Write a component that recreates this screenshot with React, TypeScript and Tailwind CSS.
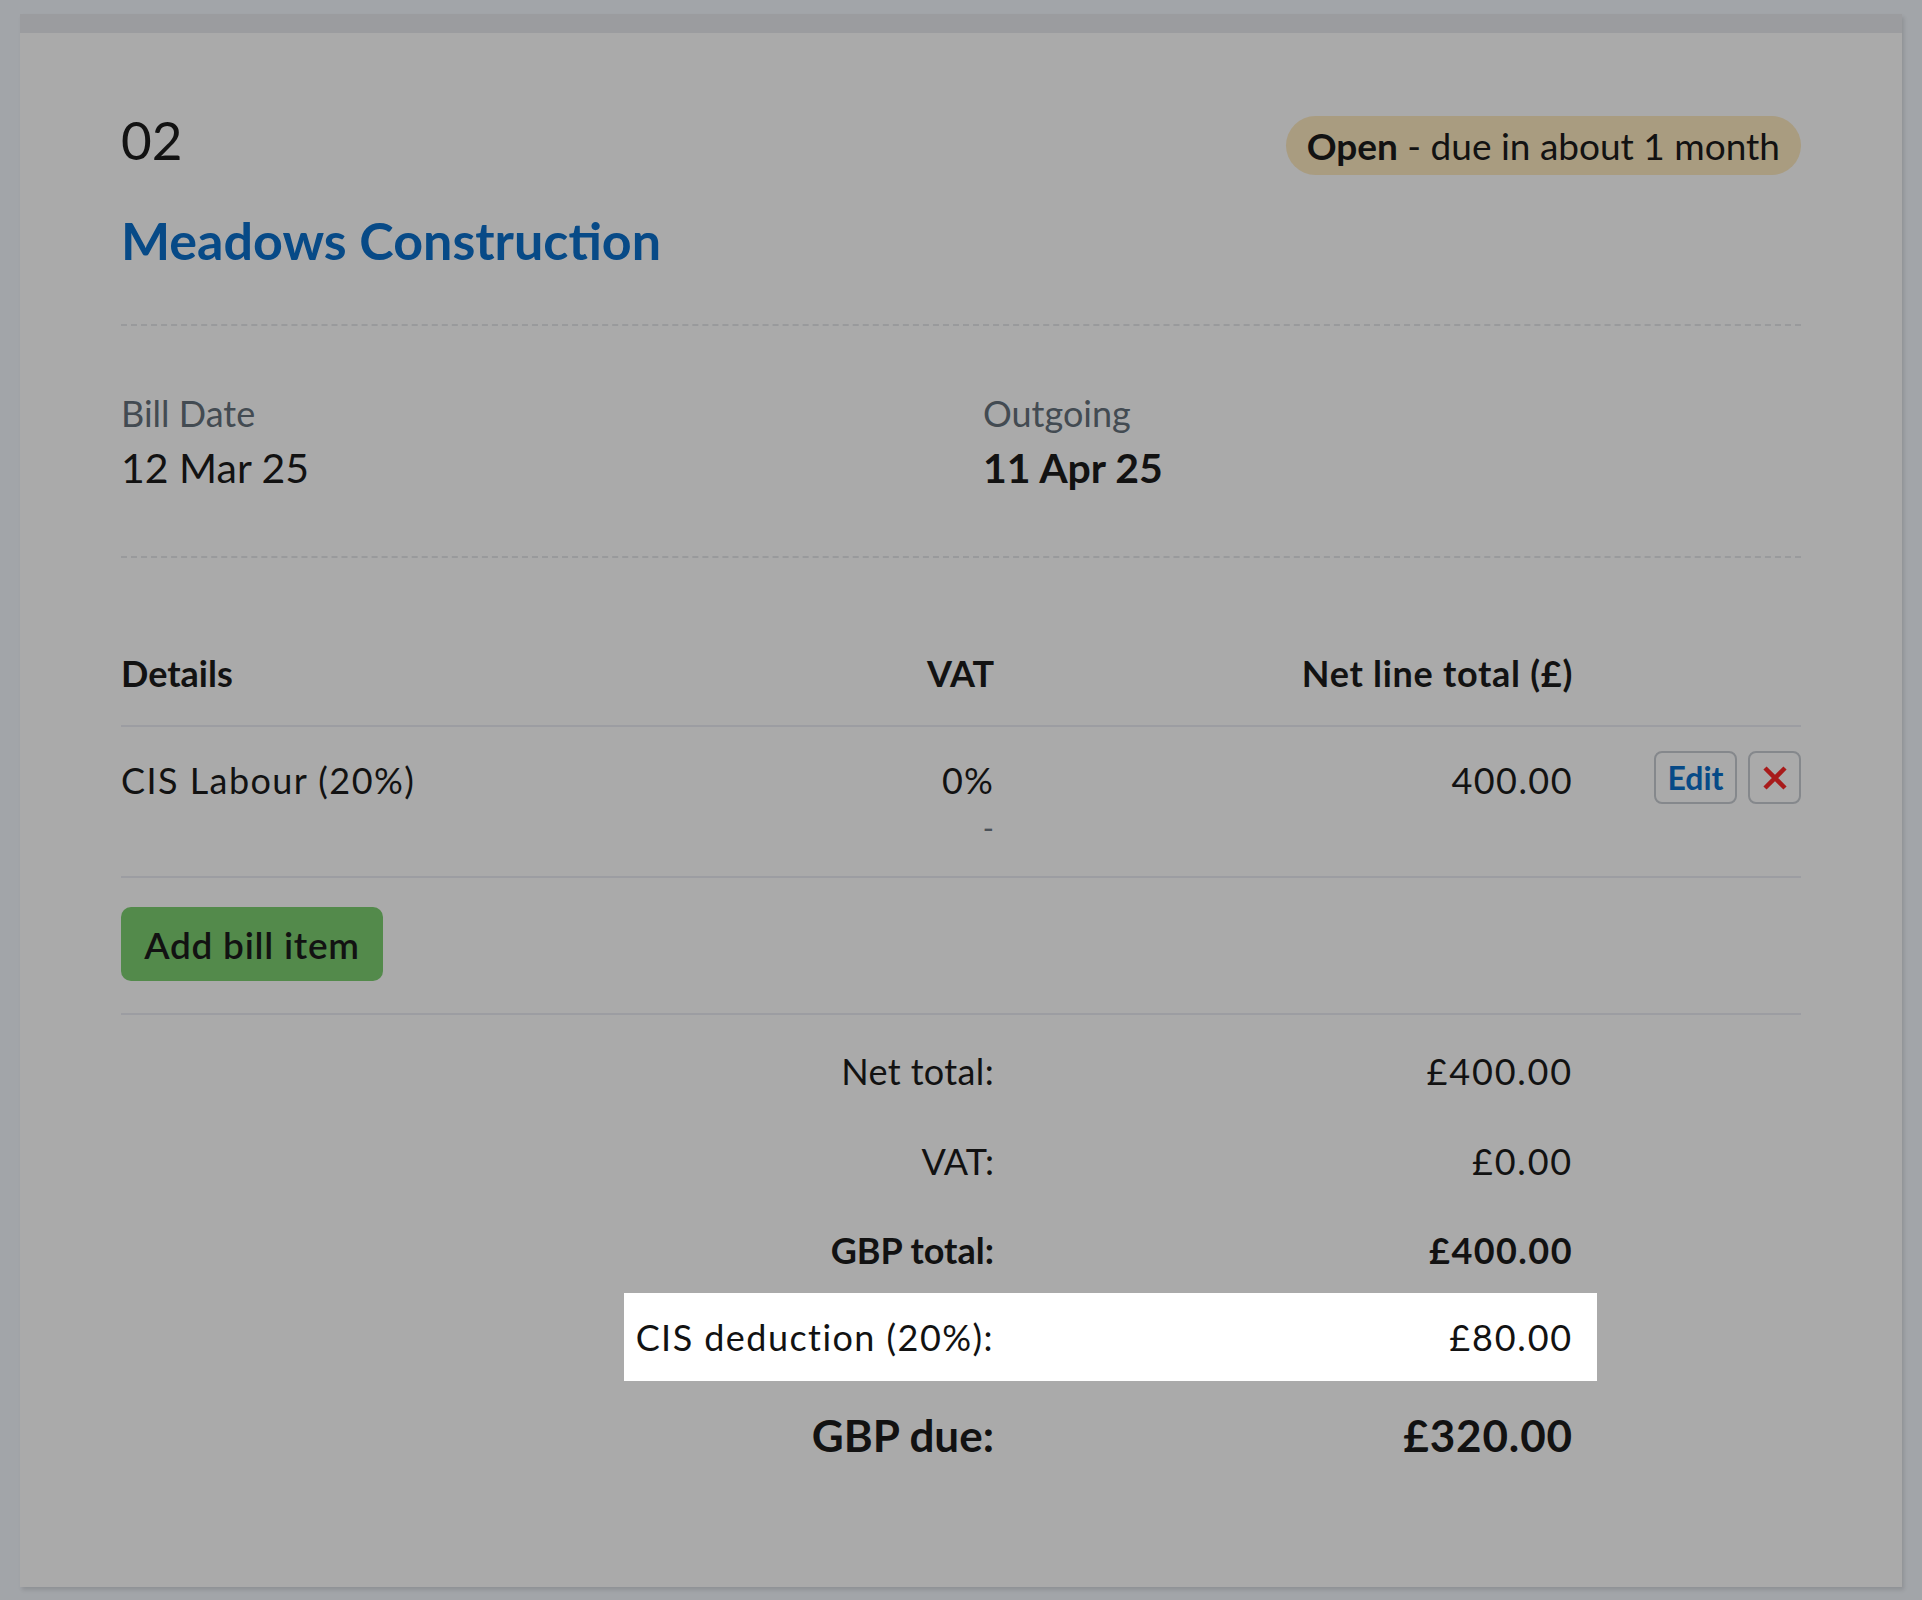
import React from "react";

export default function App() {
  return (
    <div className="min-h-[1600px] w-[1922px] bg-[#a2a5a9] pt-[14px] pl-[20px] font-['Lato','Noto_Sans',sans-serif] text-[#121212]">
      <div className="w-[1882px] h-[1573px] bg-[#aaaaaa] border-t-[19px] border-[#9b9c9f] shadow-[2px_3px_4px_rgba(0,0,0,0.12)] px-[101px]">
        {/* Header */}
        <div className="h-[293px] border-b-2 border-dashed border-[#999a9c] pt-[83px]">
          <div className="flex items-center justify-between h-[59px]">
            <div className="text-[53px] leading-none pb-[12px]">02</div>
            <div className="h-[59px] rounded-full bg-[#a99c80] px-[21px] flex items-center text-[37px] leading-none">
              <span className="font-bold">Open</span>
              <span>&nbsp;- due in about 1 month</span>
            </div>
          </div>
          <div className="mt-[39px] text-[52px] leading-none font-bold text-[#074a87]">
            Meadows Construction
          </div>
        </div>

        {/* Dates */}
        <div className="h-[232px] border-b-2 border-dashed border-[#999a9c] flex pt-[69px]">
          <div className="w-[862px]">
            <div className="text-[36px] leading-none text-[#434b52]">Bill Date</div>
            <div className="mt-[16px] text-[41px] leading-none">12 Mar 25</div>
          </div>
          <div>
            <div className="text-[36px] leading-none text-[#434b52]">Outgoing</div>
            <div className="mt-[16px] text-[41px] leading-none font-bold">11 Apr 25</div>
          </div>
        </div>

        {/* Table header */}
        <div className="h-[169px] border-b-2 border-[#9c9da2] flex items-start pt-[97px] text-[36px] leading-none font-bold">
          <div className="w-[600px]">Details</div>
          <div className="w-[273px] text-right">VAT</div>
          <div className="w-[579px] text-right tracking-[0.02em]">Net line total (£)</div>
          <div className="flex-1" />
        </div>

        {/* Item row */}
        <div className="h-[151px] border-b-2 border-[#9c9da2] flex items-start pt-[24px] text-[36px] leading-none">
          <div className="w-[600px] pt-[11px] tracking-[0.04em]">CIS Labour (20%)</div>
          <div className="w-[273px] text-right pt-[11px]">
            <div className="tracking-[0.03em]">0%</div>
            <div className="mt-[14px] text-[30px] text-[#4a5158]">-</div>
          </div>
          <div className="w-[579px] text-right pt-[11px] tracking-[0.04em]">400.00</div>
          <div className="flex-1 flex justify-end gap-[11px]">
            <button className="h-[53px] w-[83px] rounded-[8px] border-2 border-[#85888c] text-[32px] font-bold text-[#074a87] leading-none">
              Edit
            </button>
            <button className="h-[53px] w-[53px] rounded-[8px] border-2 border-[#85888c] flex items-center justify-center">
              <svg width="26" height="26" viewBox="0 0 26 26">
                <path d="M3 3 L23 23 M23 3 L3 23" stroke="#a81b1b" strokeWidth="4.5" strokeLinecap="butt" />
              </svg>
            </button>
          </div>
        </div>

        {/* Add button */}
        <div className="h-[137px] border-b-2 border-[#9c9da2] pt-[29px]">
          <button className="h-[74px] w-[262px] rounded-[10px] bg-[#538a4b] text-[37px] font-semibold leading-none text-[#121212] tracking-[0.02em]">
            Add bill item
          </button>
        </div>

        {/* Totals */}
        <div className="pt-[11px] text-[36px] leading-none">
          <div className="ml-[503px] w-[973px] h-[90px] flex items-center">
            <div className="w-[370px] text-right tracking-[0.01em]">Net total:</div>
            <div className="w-[579px] text-right tracking-[0.05em]">£400.00</div>
          </div>
          <div className="ml-[503px] w-[973px] h-[90px] flex items-center">
            <div className="w-[370px] text-right">VAT:</div>
            <div className="w-[579px] text-right tracking-[0.05em]">£0.00</div>
          </div>
          <div className="ml-[503px] w-[973px] h-[87px] flex items-center font-bold">
            <div className="w-[370px] text-right">GBP total:</div>
            <div className="w-[579px] text-right tracking-[0.04em]">£400.00</div>
          </div>
          <div className="ml-[503px] w-[973px] h-[88px] flex items-center bg-white">
            <div className="w-[370px] text-right tracking-[0.04em]">CIS deduction (20%):</div>
            <div className="w-[579px] text-right tracking-[0.05em]">£80.00</div>
          </div>
          <div className="ml-[503px] w-[973px] h-[108px] flex items-center font-bold text-[44px]">
            <div className="w-[370px] text-right">GBP due:</div>
            <div className="w-[579px] text-right tracking-[0.02em]">£320.00</div>
          </div>
        </div>
      </div>
    </div>
  );
}
